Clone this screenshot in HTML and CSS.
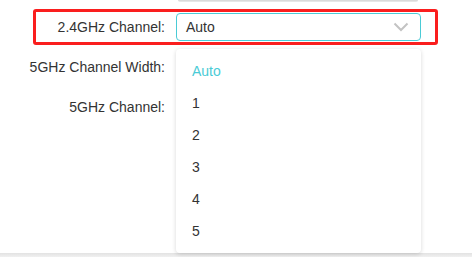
FILE: index.html
```html
<!DOCTYPE html>
<html lang="en">
<head>
<meta charset="utf-8">
<title>Wireless Channel</title>
<link rel="stylesheet" href="styles.css">
</head>
<body>
<div class="page">
  <div class="prev-shadow"></div>
  <div class="form">
    <div class="row highlight">
      <span class="label">2.4GHz Channel:</span>
      <div class="select">
        <span class="select-value">Auto</span>
        <svg class="chevron" width="16" height="10" viewBox="0 0 16 10"><path d="M1.5 1.5 L8 8 L14.5 1.5" fill="none" stroke="#c3c3c3" stroke-width="2"/></svg>
      </div>
    </div>
    <div class="row plain">
      <span class="label">5GHz Channel Width:</span>
    </div>
    <div class="row plain gap">
      <span class="label">5GHz Channel:</span>
    </div>
  </div>
  <ul class="dropdown">
    <li class="option selected">Auto</li>
    <li class="option">1</li>
    <li class="option">2</li>
    <li class="option">3</li>
    <li class="option">4</li>
    <li class="option">5</li>
  </ul>
  <div class="footer-shade"></div>
</div>
</body>
</html>
```

FILE: styles.css
```css
html, body {
  margin: 0;
  padding: 0;
  background: #ffffff;
}

body {
  font-family: "Liberation Sans", Arial, sans-serif;
  font-size: 14px;
  color: #333333;
}

.page {
  position: relative;
  width: 472px;
  height: 257px;
  overflow: hidden;
  display: flex;
  flex-direction: column;
}

.prev-shadow {
  position: absolute;
  top: 0;
  left: 178px;
  width: 240px;
  height: 2px;
  background: linear-gradient(#d4d4d4, #ececec);
  border-radius: 0 0 2px 2px;
}

.form {
  padding-top: 9px;
  display: flex;
  flex-direction: column;
}

.row {
  display: grid;
  grid-template-columns: 165px 245px;
  column-gap: 11px;
  align-items: center;
  line-height: 28px;
}

.label {
  text-align: right;
  white-space: nowrap;
}

.highlight {
  grid-template-columns: 129px 245px;
  margin-left: 33px;
  width: 405px;
  box-sizing: border-box;
  border: 3px solid #fa1e1e;
  border-radius: 3px;
  padding: 1px 0;
}

.plain {
  margin-top: 8px;
  height: 28px;
}

.plain.gap {
  margin-top: 12px;
}

.select {
  box-sizing: border-box;
  height: 28px;
  border: 1px solid #4acbd6;
  border-radius: 4px;
  padding: 0 11px 0 9px;
  display: flex;
  align-items: center;
  justify-content: space-between;
  line-height: 26px;
}

.select-value {
  color: #333333;
}

.chevron {
  display: block;
}

.dropdown {
  position: absolute;
  left: 176px;
  top: 49px;
  width: 245px;
  box-sizing: border-box;
  margin: 0;
  padding: 6px 0;
  list-style: none;
  background: #ffffff;
  border-radius: 4px;
  box-shadow: 0 1px 4px rgba(0, 0, 0, 0.16);
  z-index: 2;
}

.option {
  height: 32px;
  line-height: 32px;
  padding: 0 16px;
  color: #333333;
}

.option.selected {
  color: #4acbd6;
}

.footer-shade {
  margin-top: auto;
  height: 4px;
  background: linear-gradient(#e2e2e2, #f0f0f0);
}
```
